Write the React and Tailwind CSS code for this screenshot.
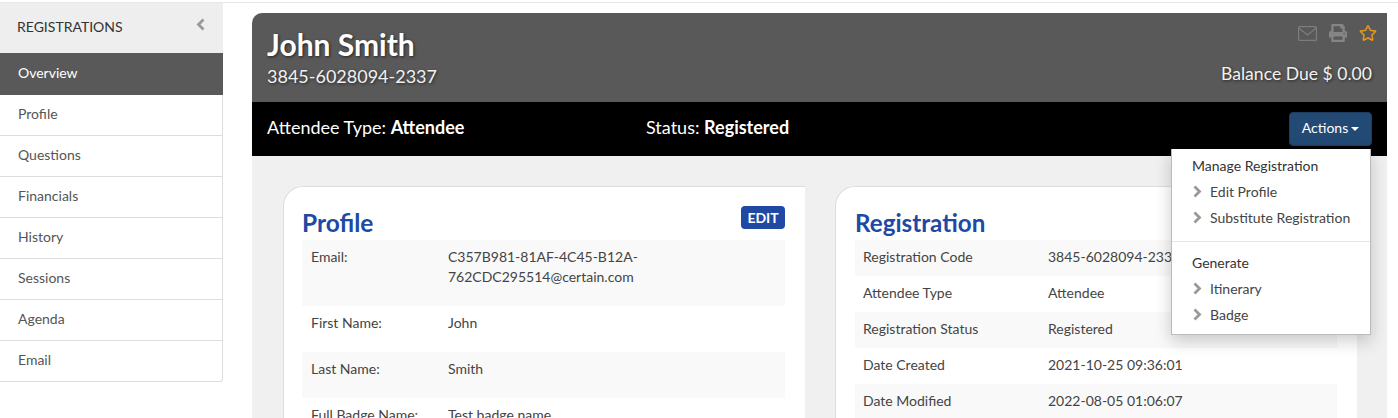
import { FaPrint, FaRegStar } from 'react-icons/fa';

const navItems = ['Profile', 'Questions', 'Financials', 'History', 'Sessions', 'Agenda', 'Email'];

const profileRows = [
  { label: 'Email:', value: 'C357B981-81AF-4C45-B12A-\n762CDC295514@certain.com', height: 'h-[66px]' },
  { label: 'First Name:', value: 'John', height: 'h-[46px]' },
  { label: 'Last Name:', value: 'Smith', height: 'h-[46px]' },
  { label: 'Full Badge Name:', value: 'Test badge name', height: 'h-[46px]' },
];

const registrationRows = [
  ['Registration Code', '3845-6028094-2337'],
  ['Attendee Type', 'Attendee'],
  ['Registration Status', 'Registered'],
  ['Date Created', '2021-10-25 09:36:01'],
  ['Date Modified', '2022-08-05 01:06:07'],
];

// heavy gray chevron, stock icons come out too thin at this size
const Chevron = ({ d, className }) => (
  <svg width="9" height="13" viewBox="0 0 9 13" fill="none" stroke="#999" strokeWidth="2.8" className={className}>
    <path d={d} />
  </svg>
);

const MenuLink = ({ children }) => (
  <div className="flex items-center h-[26px] pl-[21px] text-[14px] text-[#444]">
    <Chevron d="M1.5 1.5 L6.5 6.5 L1.5 11.5" className="mr-[8px] shrink-0" />
    <span>{children}</span>
  </div>
);

const Sidebar = () => (
  <div className="w-[223px] shrink-0">
    <div className="h-[50px] bg-[#eeeeee] flex items-center justify-between pl-[17px] pr-[18px] pb-[3px] text-[14px] text-[#333]">
      <span>REGISTRATIONS</span>
      <Chevron d="M7.5 1.5 L2.5 6.5 L7.5 11.5" className="-mt-[4px]" />
    </div>
    <div className="h-[42px] bg-[#595959] text-white text-[14px] flex items-center pl-[18px] pb-[3px]">Overview</div>
    <div className="border-r border-b border-[#ddd] rounded-br-[3px]">
      {navItems.map((item, i) => (
        <div
          key={item}
          className={`flex items-center pl-[18px] pb-[3px] text-[14px] text-[#555] ${i < navItems.length - 1 ? 'h-[41px] border-b border-[#ddd]' : 'h-[40px]'}`}
        >
          {item}
        </div>
      ))}
    </div>
  </div>
);

const Header = () => (
  <>
    <div className="h-[89px] bg-[#595959] rounded-tl-[10px] flex justify-between pl-[15px] pr-[15px] text-white [text-shadow:1px_1px_3px_rgba(0,0,0,0.6)]">
      <div className="pt-[11px]">
        <div className="text-[30px] leading-[40px] font-bold">John Smith</div>
        <div className="text-[18px] leading-[24px] text-[#f2f2f2]">3845-6028094-2337</div>
      </div>
      <div className="flex flex-col items-end pt-[11px]">
        <div className="flex items-center gap-[12px] -mr-[5px] h-[18px]">
          <svg width="19" height="15" viewBox="0 0 19 15" fill="none" stroke="#7d7d7d" strokeWidth="1.2">
            <rect x="0.6" y="0.6" width="17.8" height="13.8" rx="1" />
            <path d="M0.8 2 L9.5 9 L18.2 2" />
          </svg>
          <FaPrint size={18} className="text-[#858585]" />
          <FaRegStar size={18} className="text-[#e39a1c]" />
        </div>
        <div className="text-[17.6px] leading-[24px] mt-[20px] text-[#f2f2f2]">Balance Due $ 0.00</div>
      </div>
    </div>
    <div className="h-[54px] bg-black flex items-center pl-[15px] pr-[15px] text-white text-[18px]">
      <div className="w-[379px] pb-[3px]">Attendee Type: <span className="font-bold">Attendee</span></div>
      <div className="pb-[3px]">Status: <span className="font-bold">Registered</span></div>
      <button className="ml-auto h-[34px] w-[83px] pb-[3px] bg-[#234a75] border border-[#1d3d60] rounded-[4px] text-[14px] text-white flex items-center justify-center gap-[3px]">
        Actions
        <span className="w-0 h-0 mt-[2px] border-x-[4px] border-x-transparent border-t-[4px] border-t-white" />
      </button>
    </div>
  </>
);

const ActionsMenu = () => (
  <div className="absolute top-[136px] right-[16px] w-[200px] h-[186px] bg-white border-b border-l border-r border-[#bbb] shadow-[0_6px_16px_rgba(0,0,0,0.2)] pt-[3px]">
    <div className="h-[26px] flex items-center pl-[20px] text-[14px] text-[#333]">Manage Registration</div>
    <MenuLink>Edit Profile</MenuLink>
    <MenuLink>Substitute Registration</MenuLink>
    <div className="border-t border-[#e5e5e5] mt-[11px] mb-[7px]" />
    <div className="h-[26px] flex items-center pl-[20px] text-[14px] text-[#333]">Generate</div>
    <MenuLink>Itinerary</MenuLink>
    <MenuLink>Badge</MenuLink>
  </div>
);

const ProfileCard = () => (
  <div className="w-[522px] h-[300px] bg-white border-l border-t border-[#ddd] rounded-tl-[20px] pl-[18px] pr-[20px] pt-[19px] overflow-hidden">
    <div className="flex justify-between items-start h-[34px]">
      <h2 className="text-[24.5px] leading-[33px] font-bold text-[#2049a3]">Profile</h2>
      <span className="h-[23px] w-[44px] justify-center pb-[1px] rounded-[4px] bg-[#2049a3] text-white text-[14px] font-bold flex items-center">EDIT</span>
    </div>
    {profileRows.map((row, i) => (
      <div key={row.label} className={`flex ${row.height} pl-[9px] pt-[7px] text-[14px] leading-[20px] text-[#444] ${i % 2 === 0 ? 'bg-[#f9f9f9]' : ''}`}>
        <div className="w-[137px] shrink-0">{row.label}</div>
        <div className="whitespace-pre-line">{row.value}</div>
      </div>
    ))}
  </div>
);

const RegistrationCard = () => (
  <div className="w-[522px] h-[300px] bg-white border-l border-t border-[#ddd] rounded-tl-[20px] pl-[19px] pr-[20px] pt-[19px] overflow-hidden">
    <h2 className="h-[34px] text-[24.2px] leading-[33px] font-bold text-[#2049a3]">Registration</h2>
    {registrationRows.map(([label, value], i) => (
      <div key={label} className={`flex h-[36px] items-center pl-[8px] pb-[3px] text-[14px] text-[#444] ${i % 2 === 0 ? 'bg-[#f9f9f9]' : ''}`}>
        <div className="w-[185px] shrink-0">{label}</div>
        <div>{value}</div>
      </div>
    ))}
  </div>
);

export default function App() {
  return (
    <div className="h-[418px] w-[1398px] overflow-hidden bg-white font-['Lato',sans-serif]">
      <div className="mt-[2px] border-t border-[#e8e8e8] flex">
        <Sidebar />
        <div className="relative ml-[29px] mt-[10px] w-[1135px]">
          <Header />
          <div className="h-[300px] bg-[#f0f0f0] pt-[30px] pl-[31px] flex gap-[30px]">
            <ProfileCard />
            <RegistrationCard />
          </div>
          <ActionsMenu />
        </div>
      </div>
    </div>
  );
}
